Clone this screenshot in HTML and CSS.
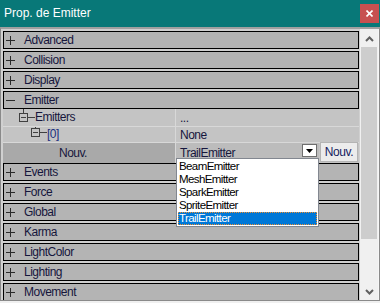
FILE: index.html
```html
<!DOCTYPE html>
<html lang="fr">

<head>
    <meta charset="UTF-8">
    <title>Prop. de Emitter</title>
    <link rel="stylesheet" href="styles.css">
</head>

<body>
    <div class="window">
        <div class="titlebar">
            <span class="title">Prop. de Emitter</span>
            <span class="close">
                <svg width="7" height="7" viewBox="0 0 7 7"><path d="M0.5 0.5L6.5 6.5M6.5 0.5L0.5 6.5" stroke="#fff" stroke-width="1.6"/></svg>
            </span>
        </div>
        <div class="content">
            <div class="list">
                <div class="cat"><svg class="sign" width="9" height="9"><path d="M0 4.5H9M4.5 0V9" stroke="#2a2a2a"/></svg>Advanced</div>
                <div class="cat"><svg class="sign" width="9" height="9"><path d="M0 4.5H9M4.5 0V9" stroke="#2a2a2a"/></svg>Collision</div>
                <div class="cat"><svg class="sign" width="9" height="9"><path d="M0 4.5H9M4.5 0V9" stroke="#2a2a2a"/></svg>Display</div>
                <div class="cat open"><svg class="sign" width="9" height="9"><path d="M0 4.5H9" stroke="#2a2a2a"/></svg>Emitter</div>
                <!-- propriétés de Emitter -->
                <div class="props">
                    <div class="prop p1">
                        <div class="name lvl1">
                            <svg class="tree" width="16" height="17"><path d="M4.5 0V4M2 8.5H7M9 8.5H16" stroke="#404040"/><rect x="0.5" y="4.5" width="8" height="8" fill="none" stroke="#404040"/></svg>Emitters
                        </div>
                        <div class="value">...</div>
                    </div>
                    <div class="prop p2">
                        <div class="name lvl2">
                            <svg class="tree" width="16" height="15"><path d="M4.5 0V1M2 5.5H7M9 5.5H16" stroke="#404040"/><rect x="0.5" y="1.5" width="8" height="8" fill="none" stroke="#404040"/></svg><span class="idx">[0]</span>
                        </div>
                        <div class="value">None</div>
                    </div>
                    <div class="prop p3">
                        <div class="name new">Nouv.</div>
                        <div class="value">
                            <div class="combo">
                                <span class="combo-text">TrailEmitter</span>
                                <span class="drop"><svg width="7" height="4"><path d="M0 0H7L3.5 4Z" fill="#000"/></svg></span>
                            </div>
                            <div class="btn">Nouv.</div>
                        </div>
                    </div>
                </div>
                <div class="cat"><svg class="sign" width="9" height="9"><path d="M0 4.5H9M4.5 0V9" stroke="#2a2a2a"/></svg>Events</div>
                <div class="cat"><svg class="sign" width="9" height="9"><path d="M0 4.5H9M4.5 0V9" stroke="#2a2a2a"/></svg>Force</div>
                <div class="cat"><svg class="sign" width="9" height="9"><path d="M0 4.5H9M4.5 0V9" stroke="#2a2a2a"/></svg>Global</div>
                <div class="cat"><svg class="sign" width="9" height="9"><path d="M0 4.5H9M4.5 0V9" stroke="#2a2a2a"/></svg>Karma</div>
                <div class="cat"><svg class="sign" width="9" height="9"><path d="M0 4.5H9M4.5 0V9" stroke="#2a2a2a"/></svg>LightColor</div>
                <div class="cat"><svg class="sign" width="9" height="9"><path d="M0 4.5H9M4.5 0V9" stroke="#2a2a2a"/></svg>Lighting</div>
                <div class="cat"><svg class="sign" width="9" height="9"><path d="M0 4.5H9M4.5 0V9" stroke="#2a2a2a"/></svg>Movement</div>

                <!-- liste déroulante ouverte -->
                <div class="listbox">
                    <div class="item">BeamEmitter</div>
                    <div class="item">MeshEmitter</div>
                    <div class="item">SparkEmitter</div>
                    <div class="item">SpriteEmitter</div>
                    <div class="item selected">TrailEmitter</div>
                </div>
            </div>
            <div class="scrollbar">
                <div class="arrow up"><svg width="9" height="6"><path d="M1 5L4.5 1.5L8 5" fill="none" stroke="#606060" stroke-width="2"/></svg></div>
                <div class="thumb"></div>
                <div class="arrow down"><svg width="9" height="6"><path d="M1 1L4.5 4.5L8 1" fill="none" stroke="#606060" stroke-width="2"/></svg></div>
            </div>
        </div>
    </div>
</body>

</html>
```

FILE: styles.css
```css
* {
    margin: 0;
    padding: 0;
    box-sizing: border-box;
}

body {
    width: 380px;
    height: 303px;
    overflow: hidden;
    background-color: #f0f0f0;
    font-family: "Liberation Sans", Arial, sans-serif;
    font-size: 12px;
    color: #16163c;
}

.window {
    width: 380px;
    height: 301px;
    display: flex;
    flex-direction: column;
}

/* barre de titre */
.titlebar {
    height: 27px;
    background-color: #087878;
    display: flex;
    justify-content: space-between;
    align-items: flex-start;
    padding: 0 1px 0 4px;
}

.titlebar .title {
    color: #fff;
    font-size: 12px;
    line-height: 27px;
}

.titlebar .close {
    width: 19px;
    height: 19px;
    margin-top: 4px;
    background-color: #c75050;
    display: flex;
    align-items: center;
    justify-content: center;
}

.content {
    height: 274px;
    display: flex;
    background-color: #d0d0d0;
    border: 1px solid #8a8a8a;
    border-top: 2px solid #a0a0a0;
}

.list {
    width: 359px;
    padding: 2px 0 0 2px;
    overflow: hidden;
    position: relative;
}

/* catégories */
.cat {
    width: 356px;
    height: 18px;
    border: 1px solid #000;
    background-color: #b4b4b4;
    margin-bottom: 2px;
    display: flex;
    align-items: center;
    letter-spacing: -0.5px;
}

.cat.open {
    margin-bottom: 0;
}

.cat .sign {
    margin: 0 9px 0 2px;
    flex-shrink: 0;
}

/* propriétés */
.props {
    width: 356px;
    background-color: #c4c4c4;
}

.prop {
    display: flex;
    border-bottom: 1px solid #d8d8d8;
}

.prop.p1 {
    height: 18px;
}

.prop.p2 {
    height: 16px;
}

.prop.p3 {
    height: 20px;
    border-bottom: 0;
}

.prop .name {
    width: 173px;
    border-right: 1px solid #d8d8d8;
    display: flex;
    align-items: center;
    letter-spacing: -0.5px;
}

.prop .name.lvl1 {
    padding-left: 16px;
    align-items: flex-start;
    line-height: 17px;
}

.prop .name.lvl2 {
    padding-left: 28px;
    align-items: flex-start;
    line-height: 15px;
}

.prop .name.new {
    padding-left: 56px;
    background-color: #a9a9a9;
}

.tree {
    flex-shrink: 0;
}

.idx {
    color: #1a2f80;
}

.prop .value {
    flex: 1;
    padding-left: 4px;
    display: flex;
    align-items: center;
    letter-spacing: -0.5px;
}

.prop.p3 .value {
    padding-left: 0;
    align-items: flex-start;
}

.combo {
    width: 143px;
    height: 20px;
    background-color: #bcbcbc;
    display: flex;
    align-items: flex-start;
    justify-content: space-between;
}

.combo-text {
    line-height: 20px;
    padding-left: 4px;
}

.drop {
    width: 15px;
    height: 13px;
    margin: 1px 2px 0 0;
    background-color: #fff;
    border: 1px solid #6e6e6e;
    display: flex;
    align-items: center;
    justify-content: center;
}

.btn {
    width: 38px;
    height: 20px;
    margin: -1px 0 0 1px;
    background-color: #ececec;
    border: 1px solid #b4b4b4;
    color: #14215e;
    line-height: 18px;
    text-align: center;
    letter-spacing: -0.4px;
}

/* liste déroulante */
.listbox {
    position: absolute;
    left: 175px;
    top: 129px;
    width: 143px;
    height: 69px;
    background-color: #fff;
    border: 1px solid #828790;
    padding: 1px 1px 0 1px;
    color: #000;
}

.listbox .item {
    height: 13px;
    line-height: 13px;
    padding-left: 1px;
    font-size: 11.5px;
    letter-spacing: -0.6px;
}

.listbox .item.selected {
    background-color: #0078d7;
    color: #fff;
    outline: 1px dotted #f09030;
    outline-offset: -1px;
}

/* barre de défilement */
.scrollbar {
    width: 19px;
    background-color: #f0f0f0;
    border-right: 1px solid #f6f6f6;
    display: flex;
    flex-direction: column;
    padding-top: 1px;
}

.scrollbar .arrow {
    height: 17px;
    display: flex;
    align-items: center;
    justify-content: center;
}

.scrollbar .up {
    align-items: flex-start;
    padding-top: 6px;
}

.scrollbar .thumb {
    height: 192px;
    margin: 0 1px;
    background-color: #cdcdcd;
}

.scrollbar .down {
    margin-top: auto;
}
```
